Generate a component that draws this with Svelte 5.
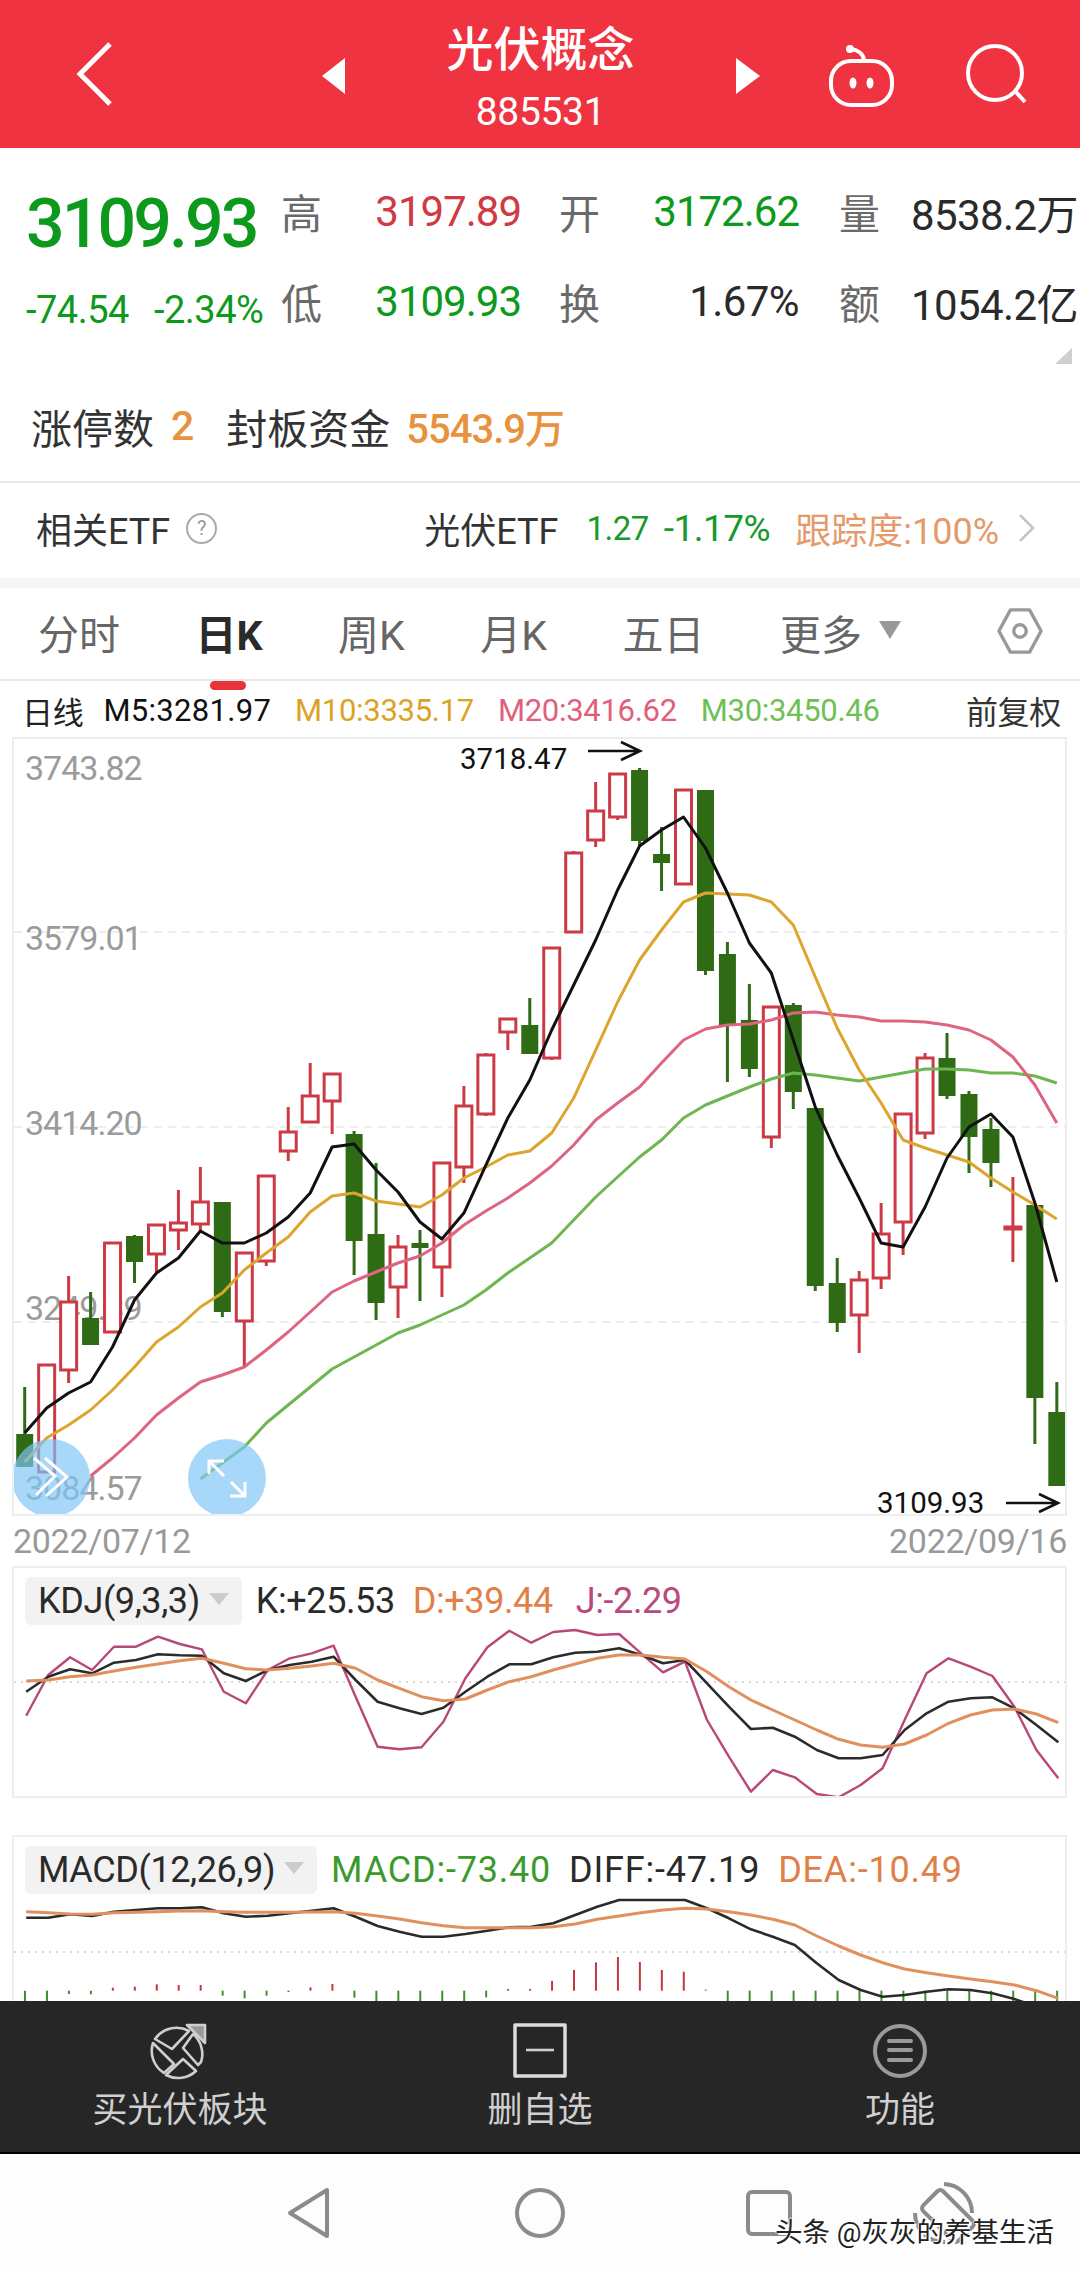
<script>
	// candle x position, same step for every panel
	const cx = (i) => 24.7 + 21.96 * i;

	// type, high, body top, body bottom, low (page y)
	const candles = [
		['g', 1387, 1434, 1467, 1467],
		['r', 1365, 1365, 1472, 1472],
		['r', 1276, 1302, 1370, 1383],
		['g', 1292, 1318, 1345, 1345],
		['r', 1243, 1243, 1332, 1332],
		['g', 1235, 1236, 1262, 1283],
		['r', 1225, 1225, 1254, 1273],
		['r', 1190, 1223, 1230, 1250],
		['r', 1167, 1202, 1224, 1233],
		['g', 1202, 1202, 1312, 1317],
		['r', 1253, 1253, 1321, 1368],
		['r', 1176, 1176, 1261, 1266],
		['r', 1107, 1132, 1151, 1161],
		['r', 1063, 1096, 1122, 1122],
		['r', 1074, 1074, 1101, 1134],
		['g', 1131, 1134, 1241, 1275],
		['g', 1163, 1234, 1303, 1320],
		['r', 1235, 1247, 1287, 1318],
		['g', 1230, 1243, 1248, 1301],
		['r', 1163, 1163, 1267, 1297],
		['r', 1086, 1106, 1167, 1183],
		['r', 1053, 1055, 1114, 1116],
		['r', 1019, 1019, 1032, 1050],
		['g', 998, 1025, 1054, 1054],
		['r', 948, 948, 1058, 1060],
		['r', 851, 853, 932, 932],
		['r', 782, 811, 840, 847],
		['r', 773, 774, 817, 820],
		['g', 768, 770, 841, 847],
		['g', 827, 854, 863, 891],
		['r', 789, 790, 884, 884],
		['g', 790, 790, 971, 975],
		['g', 942, 954, 1026, 1082],
		['g', 984, 1020, 1069, 1077],
		['r', 1007, 1007, 1137, 1148],
		['g', 1003, 1005, 1092, 1109],
		['g', 1108, 1108, 1286, 1291],
		['g', 1258, 1283, 1323, 1332],
		['r', 1271, 1280, 1315, 1353],
		['r', 1203, 1234, 1278, 1289],
		['r', 1114, 1114, 1222, 1255],
		['r', 1053, 1058, 1133, 1139],
		['g', 1033, 1058, 1096, 1099],
		['g', 1091, 1094, 1137, 1173],
		['g', 1118, 1129, 1163, 1187],
		['r', 1177, 1227, 1229, 1262],
		['g', 1203, 1205, 1398, 1444],
		['g', 1382, 1412, 1486, 1486]
	];

	const ma5 = [1433, 1408, 1393, 1382, 1347, 1300, 1273, 1258, 1231, 1243, 1243, 1233, 1217, 1193, 1147, 1144, 1170, 1192, 1222, 1239, 1213, 1165, 1118, 1080, 1030, 985, 940, 890, 846, 830, 817, 848, 893, 943, 973, 1040, 1107, 1155, 1198, 1243, 1247, 1207, 1158, 1127, 1114, 1137, 1203, 1282];
	const ma10 = [1462, 1438, 1425, 1410, 1390, 1367, 1342, 1327, 1307, 1293, 1270, 1253, 1237, 1212, 1196, 1193, 1201, 1204, 1207, 1195, 1178, 1167, 1155, 1151, 1133, 1098, 1050, 1002, 960, 930, 902, 893, 894, 895, 902, 925, 977, 1028, 1070, 1103, 1140, 1148, 1155, 1162, 1178, 1192, 1205, 1219];
	const ma20 = [null, null, null, 1476, 1458, 1438, 1415, 1398, 1382, 1375, 1367, 1350, 1332, 1312, 1292, 1281, 1272, 1263, 1256, 1243, 1225, 1211, 1198, 1183, 1166, 1145, 1120, 1103, 1087, 1063, 1040, 1029, 1025, 1024, 1020, 1013, 1012, 1015, 1017, 1021, 1021, 1022, 1025, 1030, 1040, 1057, 1085, 1123];
	const ma30 = [null, null, null, null, null, null, null, null, 1479, 1463, 1447, 1423, 1405, 1387, 1369, 1357, 1345, 1333, 1325, 1315, 1305, 1290, 1273, 1258, 1243, 1220, 1197, 1177, 1157, 1140, 1118, 1105, 1096, 1087, 1079, 1073, 1075, 1078, 1081, 1077, 1073, 1069, 1069, 1070, 1073, 1073, 1076, 1083];

	// KDJ and MACD values are read at 3x: page y = panel top + v / 3
	const kLine = [455, 410, 388, 400, 368, 360, 343, 346, 347, 400, 423, 390, 375, 365, 350, 420, 485, 505, 522, 503, 455, 410, 373, 373, 352, 338, 335, 325, 345, 370, 360, 430, 500, 567, 563, 590, 630, 655, 655, 645, 570, 520, 485, 475, 472, 505, 555, 607];
	const dLine = [423, 420, 410, 405, 393, 382, 372, 362, 355, 370, 386, 390, 385, 378, 370, 385, 420, 445, 470, 482, 477, 450, 425, 410, 390, 372, 355, 345, 345, 352, 357, 395, 440, 480, 510, 540, 570, 598, 615, 622, 612, 585, 550, 525, 510, 507, 522, 548];
	const jLine = [527, 405, 352, 390, 320, 320, 290, 312, 328, 455, 490, 390, 355, 340, 317, 470, 620, 628, 622, 545, 415, 322, 272, 308, 276, 270, 285, 282, 340, 397, 365, 540, 650, 755, 690, 712, 762, 772, 735, 685, 540, 400, 355, 380, 408, 500, 630, 715];

	const diffLine = [293, 293, 283, 288, 275, 270, 265, 265, 262, 280, 290, 287, 280, 272, 265, 290, 318, 335, 350, 350, 342, 332, 322, 320, 310, 285, 260, 240, 240, 240, 240, 265, 295, 328, 350, 375, 430, 480, 510, 530, 525, 515, 508, 510, 520, 537, 560, 585];
	const deaLine = [275, 278, 282, 283, 278, 277, 275, 273, 272, 275, 277, 277, 277, 276, 275, 280, 288, 297, 308, 317, 323, 323, 323, 323, 320, 312, 298, 288, 278, 270, 265, 267, 275, 285, 298, 315, 348, 378, 405, 428, 447, 458, 468, 477, 485, 495, 512, 535];
	// bar end, the zero line sits at 512
	const macdBars = [545, 545, 522, 523, 503, 500, 493, 495, 495, 527, 535, 527, 516, 502, 492, 533, 545, 545, 545, 545, 545, 532, 507, 507, 483, 450, 427, 411, 426, 450, 455, 509, 545, 545, 545, 545, 545, 545, 545, 545, 545, 545, 545, 545, 545, 545, 545, 545];

	const points = (arr) =>
		arr
			.map((y, i) => (y === null ? null : `${cx(i).toFixed(1)},${y}`))
			.filter(Boolean)
			.join(' ');

	const sub = (arr, top) =>
		arr.map((v, i) => `${(cx(i) + 1.5).toFixed(1)},${(top + v / 3).toFixed(1)}`).join(' ');

	const priceLabels = [
		{ text: '3743.82', y: 780 },
		{ text: '3579.01', y: 950 },
		{ text: '3414.20', y: 1135 },
		{ text: '3249.39', y: 1320 },
		{ text: '3084.57', y: 1500 }
	];
	const grid = [932, 1127, 1322];

	const tabs = [
		{ label: '分时' },
		{ label: '日K', active: true },
		{ label: '周K' },
		{ label: '月K' },
		{ label: '五日' }
	];
</script>

<div class="page">
	<header class="topbar">
		<svg class="back" viewBox="0 0 40 66" aria-hidden="true">
			<path d="M35 3 L5 33 L35 63" />
		</svg>
		<div class="prev"></div>
		<div class="title">
			<div class="name">光伏概念</div>
			<div class="code">885531</div>
		</div>
		<div class="next"></div>
		<svg class="robot" viewBox="0 0 66 64" aria-hidden="true">
			<rect x="2" y="16" width="61" height="44" rx="20" />
			<path d="M35 16 C35 9 29 5 22 4" />
			<circle cx="21" cy="4" r="4" class="solid" />
			<ellipse cx="24" cy="38" rx="3.5" ry="5.5" class="solid" />
			<ellipse cx="41" cy="38" rx="3.5" ry="5.5" class="solid" />
		</svg>
		<svg class="search" viewBox="0 0 64 64" aria-hidden="true">
			<circle cx="30" cy="29" r="27" />
			<path d="M51 48 L60 58" />
		</svg>
	</header>

	<section class="quote">
		<div class="big">3109.93</div>
		<div class="lbl">高</div>
		<div class="val red">3197.89</div>
		<div class="lbl">开</div>
		<div class="val green">3172.62</div>
		<div class="lbl">量</div>
		<div class="val dark">8538.2万</div>

		<div class="change"><span>-74.54</span><span>-2.34%</span></div>
		<div class="lbl">低</div>
		<div class="val green">3109.93</div>
		<div class="lbl">换</div>
		<div class="val dark">1.67%</div>
		<div class="lbl">额</div>
		<div class="val dark">1054.2亿</div>
	</section>
	<div class="corner"></div>

	<div class="limit">
		<span>涨停数</span><b class="limit-num">2</b>
		<span class="fund">封板资金</span><b class="fund-num">5543.9万</b>
	</div>

	<div class="etf">
		<span class="etf-title">相关ETF</span>
		<span class="help">?</span>
		<span class="etf-name">光伏ETF</span>
		<span class="etf-green">1.27</span>
		<span class="etf-green pct">-1.17%</span>
		<span class="track">跟踪度:100%</span>
		<svg class="more" viewBox="0 0 18 30" aria-hidden="true"><path d="M2 2 L15 15 L2 28" /></svg>
	</div>

	<div class="band"></div>

	<nav class="tabs">
		{#each tabs as tab}
			<span class="tab" class:active={tab.active}>{tab.label}</span>
		{/each}
		<span class="tab more-tab">更多<i class="drop"></i></span>
		<svg class="hex" viewBox="0 0 48 48" aria-hidden="true">
			<path d="M14 2 H34 L46 24 L34 46 H14 L2 24 Z" stroke-linejoin="round" />
			<circle cx="24" cy="24" r="6.5" />
		</svg>
	</nav>

	<div class="ma-row">
		<span class="daily">日线</span>
		<span class="m5">M5:3281.97</span>
		<span class="m10">M10:3335.17</span>
		<span class="m20">M20:3416.62</span>
		<span class="m30">M30:3450.46</span>
		<span class="adjust">前复权</span>
	</div>

	<div class="frame kline">
		<svg viewBox="14 739 1051 775" width="1051" height="775">
			{#each grid as y}
				<line class="dash" x1="14" x2="1065" y1={y} y2={y} />
			{/each}
			{#each priceLabels as p}
				<text class="price" x="25" y={p.y}>{p.text}</text>
			{/each}

			{#each candles as [type, high, top, bottom, low], i}
				{#if type === 'g'}
					<line class="wick-g" x1={cx(i)} x2={cx(i)} y1={high} y2={low} />
					<rect class="body-g" x={cx(i) - 8.5} y={top} width="17" height={bottom - top} />
				{:else}
					<line class="wick-r" x1={cx(i)} x2={cx(i)} y1={high} y2={top} />
					<line class="wick-r" x1={cx(i)} x2={cx(i)} y1={bottom} y2={low} />
					<rect class="body-r" x={cx(i) - 8} y={top} width="16" height={bottom - top} />
				{/if}
			{/each}

			<polyline class="line c30" points={points(ma30)} />
			<polyline class="line c20" points={points(ma20)} />
			<polyline class="line c10" points={points(ma10)} />
			<polyline class="line c5" points={points(ma5)} />

			<text class="mark" x="460" y="769">3718.47</text>
			<path class="arrow" d="M588 751 H639 M621 742 L640 751 L621 760" />
			<text class="mark" x="877" y="1513">3109.93</text>
			<path class="arrow" d="M1006 1503 H1057 M1039 1494 L1058 1503 L1039 1512" />

			<circle class="float" cx="51" cy="1478" r="39" />
			<path class="float-ico" d="M34 1458 L55 1476 L36 1495 M45 1458 L67 1477 L46 1496" />
			<circle class="float" cx="227" cy="1478" r="39" />
			<path class="float-ico" d="M209 1461 L224 1476 M231 1482 L245 1496 M224 1461 H209 V1474 M230 1496 H245 V1482" />
		</svg>
	</div>

	<div class="dates"><span>2022/07/12</span><span>2022/09/16</span></div>

	<div class="frame kdj">
		<svg viewBox="14 1568 1051 228" width="1051" height="228">
			<line class="dots" x1="14" x2="1065" y1="1682" y2="1682" />
			<polyline class="line thin cj" points={sub(jLine, 1540)} />
			<polyline class="line thin ck" points={sub(kLine, 1540)} />
			<polyline class="line cd" points={sub(dLine, 1540)} />
		</svg>
		<div class="legend">
			<span class="picker">KDJ(9,3,3)<i class="drop small"></i></span>
			<span class="dark-txt">K:+25.53</span>
			<span class="orange-txt">D:+39.44</span>
			<span class="pink-txt">J:-2.29</span>
		</div>
	</div>

	<div class="frame macd">
		<svg viewBox="14 1837 1051 164" width="1051" height="164">
			<line class="dots" x1="14" x2="1065" y1="1952" y2="1952" />
			{#each macdBars as v, i}
				<line
					class={v < 512 ? 'bar-r' : 'bar-g'}
					x1={cx(i) + 0.3}
					x2={cx(i) + 0.3}
					y1={1820 + 512 / 3}
					y2={1820 + v / 3}
				/>
			{/each}
			<polyline class="line thin ck" points={sub(diffLine, 1820)} />
			<polyline class="line cd" points={sub(deaLine, 1820)} />
		</svg>
		<div class="legend wide">
			<span class="picker">MACD(12,26,9)<i class="drop small"></i></span>
			<span class="macd-txt">MACD:-73.40</span>
			<span class="dark-txt">DIFF:-47.19</span>
			<span class="orange-txt">DEA:-10.49</span>
		</div>
	</div>

	<div class="actions">
		<div class="action">
			<svg viewBox="0 0 60 60" aria-hidden="true" class="ico">
				<path d="M5 16 A26 26 0 0 1 39 8 L22 26 Z" />
				<path d="M3 20 L24 41 L14 50 A26 26 0 0 1 3 20 Z" />
				<path d="M43 11 A26 26 0 0 1 51 39 L48 42 L33 25 Z" />
				<path d="M33 36 L46 48 A26 26 0 0 1 16 52 Z" />
				<path d="M37 2 L55 2 L55 20 Z" class="tip" />
			</svg>
			<span>买光伏板块</span>
		</div>
		<div class="action">
			<svg viewBox="0 0 60 60" aria-hidden="true" class="ico">
				<rect x="5" y="2" width="50" height="51" />
				<path d="M16 27 H44" />
			</svg>
			<span>删自选</span>
		</div>
		<div class="action">
			<svg viewBox="0 0 60 60" aria-hidden="true" class="ico gray">
				<circle cx="30" cy="28" r="25" />
				<path d="M19 18 H41 M19 27 H41 M19 37 H41" stroke-linecap="round" />
			</svg>
			<span>功能</span>
		</div>
	</div>

	<div class="sysnav">
		<svg class="n1" viewBox="0 0 44 52" aria-hidden="true">
			<path d="M40 3 V49 L3 26 Z" stroke-linejoin="round" />
		</svg>
		<svg class="n2" viewBox="0 0 50 50" aria-hidden="true">
			<circle cx="25" cy="25" r="23" />
		</svg>
		<svg class="n3" viewBox="0 0 46 46" aria-hidden="true">
			<rect x="2" y="2" width="42" height="42" rx="4" />
		</svg>
		<svg class="n4" viewBox="0 0 64 64" aria-hidden="true">
			<rect x="21" y="8" width="28" height="50" rx="4" transform="rotate(-45 35 33)" />
			<path d="M31 1 A29 29 0 0 1 59 30" />
			<path d="M2 30 A29 29 0 0 0 32 59" />
		</svg>
		<div class="watermark">头条 @灰灰的养基生活</div>
	</div>
</div>

<style>
	:global(body) {
		margin: 0;
		background: #fff;
	}
	.page {
		width: 1080px;
		height: 2271px;
		overflow: hidden;
		position: relative;
		font-family: Roboto, 'Noto Sans CJK SC', sans-serif;
		color: #222;
	}
	svg {
		display: block;
	}

	/* Top bar */
	.topbar {
		height: 148px;
		background: #ef3340;
		position: relative;
		display: flex;
		align-items: center;
		color: #fff;
	}
	.topbar svg {
		fill: none;
		stroke: #fff;
		flex: none;
	}
	.topbar .solid {
		fill: #fff;
		stroke: none;
	}
	.back {
		width: 40px;
		height: 66px;
		margin-left: 75px;
		stroke-width: 5;
	}
	.prev,
	.next {
		width: 0;
		height: 0;
		border-top: 18px solid transparent;
		border-bottom: 18px solid transparent;
		margin-top: 4px;
	}
	.prev {
		border-right: 23px solid #fff;
		margin-left: 207px;
	}
	.next {
		border-left: 24px solid #fff;
	}
	.title {
		width: 391px;
		text-align: center;
		margin-top: 8px;
	}
	.name {
		font-size: 47px;
		line-height: 58px;
		font-weight: 500;
	}
	.code {
		font-size: 39px;
		line-height: 46px;
		margin-top: 10px;
		letter-spacing: -0.3px;
	}
	.robot {
		width: 66px;
		height: 64px;
		margin-left: 69px;
		margin-top: 6px;
		stroke-width: 4;
	}
	.search {
		width: 64px;
		height: 64px;
		margin-left: 70px;
		margin-top: 4px;
		stroke-width: 4;
	}

	/* Quote block */
	.quote {
		display: grid;
		grid-template-columns: 254px 41px 199px 79px 199px 81px 198px;
		grid-auto-rows: 90px;
		padding: 18px 0 0 27px;
		align-items: center;
	}
	.big {
		font-size: 68px;
		font-weight: 500;
		letter-spacing: -2.9px;
		color: #0c991c;
		line-height: 1;
		margin: 26px 0 0 -1px;
	}
	.change {
		display: flex;
		gap: 25px;
		font-size: 38px;
		letter-spacing: -0.5px;
		color: #0c991c;
		margin: 18px 0 0 -1px;
		white-space: nowrap;
	}
	.lbl {
		font-size: 41px;
		color: #6a6a6a;
		text-align: right;
	}
	.val {
		font-size: 42px;
		letter-spacing: -1px;
		text-align: right;
	}
	.val.dark {
		letter-spacing: -0.6px;
	}
	.red {
		color: #cf3a44;
	}
	.green {
		color: #0c991c;
	}
	.dark {
		color: #2a2a2a;
	}
	.corner {
		position: absolute;
		left: 1055px;
		top: 348px;
		width: 0;
		height: 0;
		border-left: 17px solid transparent;
		border-bottom: 16px solid #cfcfcf;
	}

	.limit {
		height: 60px;
		margin-top: 50px;
		padding-left: 31px;
		display: flex;
		align-items: center;
		font-size: 41px;
		color: #333;
	}
	.limit b {
		font-weight: 500;
		color: #e8923e;
	}
	.limit-num {
		margin-left: 17px;
	}
	.fund {
		margin-left: 32px;
	}
	.fund-num {
		margin-left: 16px;
		font-size: 40px;
		letter-spacing: -1px;
	}

	.etf {
		margin-top: 25px;
		height: 90px;
		padding-bottom: 5px;
		border-top: 2px solid #e8e8e8;
		padding-left: 36px;
		display: flex;
		align-items: center;
		font-size: 36px;
		color: #333;
	}
	.help {
		width: 27px;
		height: 27px;
		margin-left: 16px;
		border: 2px solid #aaa;
		border-radius: 50%;
		font-size: 20px;
		line-height: 27px;
		text-align: center;
		color: #999;
	}
	.etf-name {
		margin-left: 207px;
	}
	.etf-green {
		font-size: 33px;
		letter-spacing: -0.5px;
		color: #17992b;
		margin-left: 28px;
	}
	.etf-green.pct {
		margin-left: 15px;
		font-size: 37px;
	}
	.track {
		font-size: 36px;
		color: #e49a6a;
		margin-left: 25px;
	}
	.more {
		width: 18px;
		height: 30px;
		margin-left: 19px;
		fill: none;
		stroke: #c4c4c4;
		stroke-width: 2.5;
	}
	.band {
		height: 10px;
		background: #f5f5f5;
	}

	/* Tabs */
	.tabs {
		height: 93px;
		padding-left: 38px;
		border-bottom: 2px solid #e8e8e8;
		display: flex;
		align-items: center;
		gap: 75.5px;
		font-size: 41px;
		color: #666;
		position: relative;
		box-sizing: border-box;
	}
	.tab {
		position: relative;
		margin-top: -4px;
	}
	.tab.active {
		color: #2b2b2b;
		font-weight: 700;
	}
	.tab.active::after {
		content: '';
		position: absolute;
		left: 14px;
		bottom: -28px;
		width: 36px;
		height: 9px;
		border-radius: 5px;
		background: #e8333c;
	}
	.more-tab {
		display: flex;
		align-items: center;
	}
	.drop {
		display: inline-block;
		width: 0;
		height: 0;
		margin-left: 17px;
		border-left: 11px solid transparent;
		border-right: 11px solid transparent;
		border-top: 18px solid #999;
		margin-top: -4px;
	}
	.drop.small {
		margin-left: 9px;
		border-left-width: 10px;
		border-right-width: 10px;
		border-top: 12px solid #ccc;
	}
	.hex {
		position: absolute;
		left: 997px;
		top: 20px;
		width: 46px;
		height: 46px;
		fill: none;
		stroke: #999;
		stroke-width: 3.5;
	}

	.ma-row {
		height: 56px;
		padding: 2px 19px 0 22px;
		display: flex;
		align-items: center;
		gap: 24px;
		font-size: 31px;
		letter-spacing: -0.3px;
		box-sizing: border-box;
	}
	.m5 {
		color: #111;
		margin-left: -4px;
		letter-spacing: 0.3px;
	}
	.m10 {
		color: #dca224;
	}
	.m20 {
		color: #e0607c;
	}
	.m30 {
		color: #6fbf55;
	}
	.adjust {
		margin-left: auto;
		color: #333;
		font-size: 32px;
	}

	/* Chart frames */
	.frame {
		margin: 0 13px 0 12px;
		border: 2px solid #eeeeee;
		position: relative;
	}
	.dates {
		height: 50px;
		padding: 0 13px;
		display: flex;
		justify-content: space-between;
		align-items: center;
		font-size: 34px;
		letter-spacing: -0.3px;
		color: #999;
	}
	.macd {
		margin-top: 37px;
		border-bottom: none;
		height: 164px;
		overflow: hidden;
	}
	svg text {
		font-family: Roboto, sans-serif;
	}
	.price {
		font-size: 34px;
		letter-spacing: -1px;
		fill: #9b9b9b;
	}
	.mark {
		font-size: 29.5px;
		fill: #111;
	}
	.dash {
		stroke: #eeeeee;
		stroke-width: 2;
		stroke-dasharray: 8 6;
	}
	.dots {
		stroke: #d8d8d8;
		stroke-width: 2;
		stroke-dasharray: 2 5;
	}
	.wick-g {
		stroke: #2f6a14;
		stroke-width: 3;
	}
	.body-g {
		fill: #2f6a14;
	}
	.wick-r {
		stroke: #cc3a45;
		stroke-width: 3;
	}
	.body-r {
		fill: #fff;
		stroke: #cc3a45;
		stroke-width: 3;
	}
	.line {
		fill: none;
		stroke-width: 3;
		stroke-linejoin: round;
	}
	.thin {
		stroke-width: 2.4;
	}
	.c5 {
		stroke: #111;
	}
	.c10 {
		stroke: #dca52e;
	}
	.c20 {
		stroke: #dd6580;
	}
	.c30 {
		stroke: #6db650;
	}
	.ck {
		stroke: #2b2b2b;
		stroke-width: 2.6;
	}
	.cd {
		stroke: #e0905e;
		stroke-width: 3;
	}
	.cj {
		stroke: #b9487a;
	}
	.arrow {
		fill: none;
		stroke: #111;
		stroke-width: 2.6;
	}
	.float {
		fill: rgba(125, 198, 246, 0.68);
	}
	.float-ico {
		fill: none;
		stroke: #fff;
		stroke-width: 3;
	}
	.bar-r {
		stroke: #c4373f;
		stroke-width: 2;
	}
	.bar-g {
		stroke: #3d8f2c;
		stroke-width: 2;
	}

	.legend {
		position: absolute;
		left: 11px;
		top: 9px;
		display: flex;
		align-items: center;
		gap: 18px;
		font-size: 36px;
		letter-spacing: -0.4px;
		white-space: nowrap;
	}
	.legend.wide {
		letter-spacing: 0.8px;
	}
	.picker {
		height: 48px;
		padding: 0 13px;
		display: flex;
		align-items: center;
		background: #f2f2f2;
		border-radius: 6px;
		color: #2a2a2a;
		margin-right: -4px;
		letter-spacing: -0.4px;
	}
	.dark-txt {
		color: #2a2a2a;
	}
	.orange-txt {
		color: #e07f48;
	}
	.pink-txt {
		color: #b84a7e;
		margin-left: 5px;
	}
	.macd-txt {
		color: #3a9a2c;
	}

	/* Bottom action bar */
	.actions {
		position: absolute;
		left: 0;
		right: 0;
		top: 2001px;
		height: 151px;
		background: #262626;
		border-bottom: 2px solid #000;
		display: grid;
		grid-template-columns: 360px 360px 360px;
	}
	.action {
		display: flex;
		flex-direction: column;
		align-items: center;
		font-size: 35px;
		color: #cfcfcf;
		padding-top: 22px;
	}
	.action span {
		margin-top: 5px;
		line-height: 46px;
	}
	.ico {
		width: 60px;
		height: 60px;
		fill: none;
		stroke: #cfcfcf;
		stroke-width: 2.6;
		stroke-linejoin: round;
	}
	.ico .tip {
		fill: #9a9a9a;
	}
	.ico.gray {
		stroke: #9a9a9a;
		stroke-width: 4;
	}
	.ico rect {
		stroke: #dcdcdc;
		stroke-width: 3.5;
	}

	/* System nav */
	.sysnav {
		position: absolute;
		left: 0;
		right: 0;
		top: 2154px;
		height: 117px;
		background: #fdfdfd;
	}
	.sysnav svg {
		position: absolute;
		fill: none;
		stroke: #8b8b8b;
		stroke-width: 4;
		overflow: visible;
	}
	.n1 {
		left: 287px;
		top: 33px;
		width: 44px;
		height: 52px;
	}
	.n2 {
		left: 515px;
		top: 34px;
		width: 50px;
		height: 50px;
	}
	.n3 {
		left: 746px;
		top: 36px;
		width: 46px;
		height: 46px;
	}
	.n4 {
		left: 913px;
		top: 29px;
		width: 64px;
		height: 64px;
	}
	.watermark {
		position: absolute;
		left: 775px;
		top: 60px;
		font-size: 27.5px;
		line-height: 38px;
		color: #222;
		white-space: nowrap;
		text-shadow:
			1px 1px 0 #fff,
			-1px 0 0 #fff,
			2px 2px 0 #fff,
			0 -1px 0 #fff;
	}
</style>
